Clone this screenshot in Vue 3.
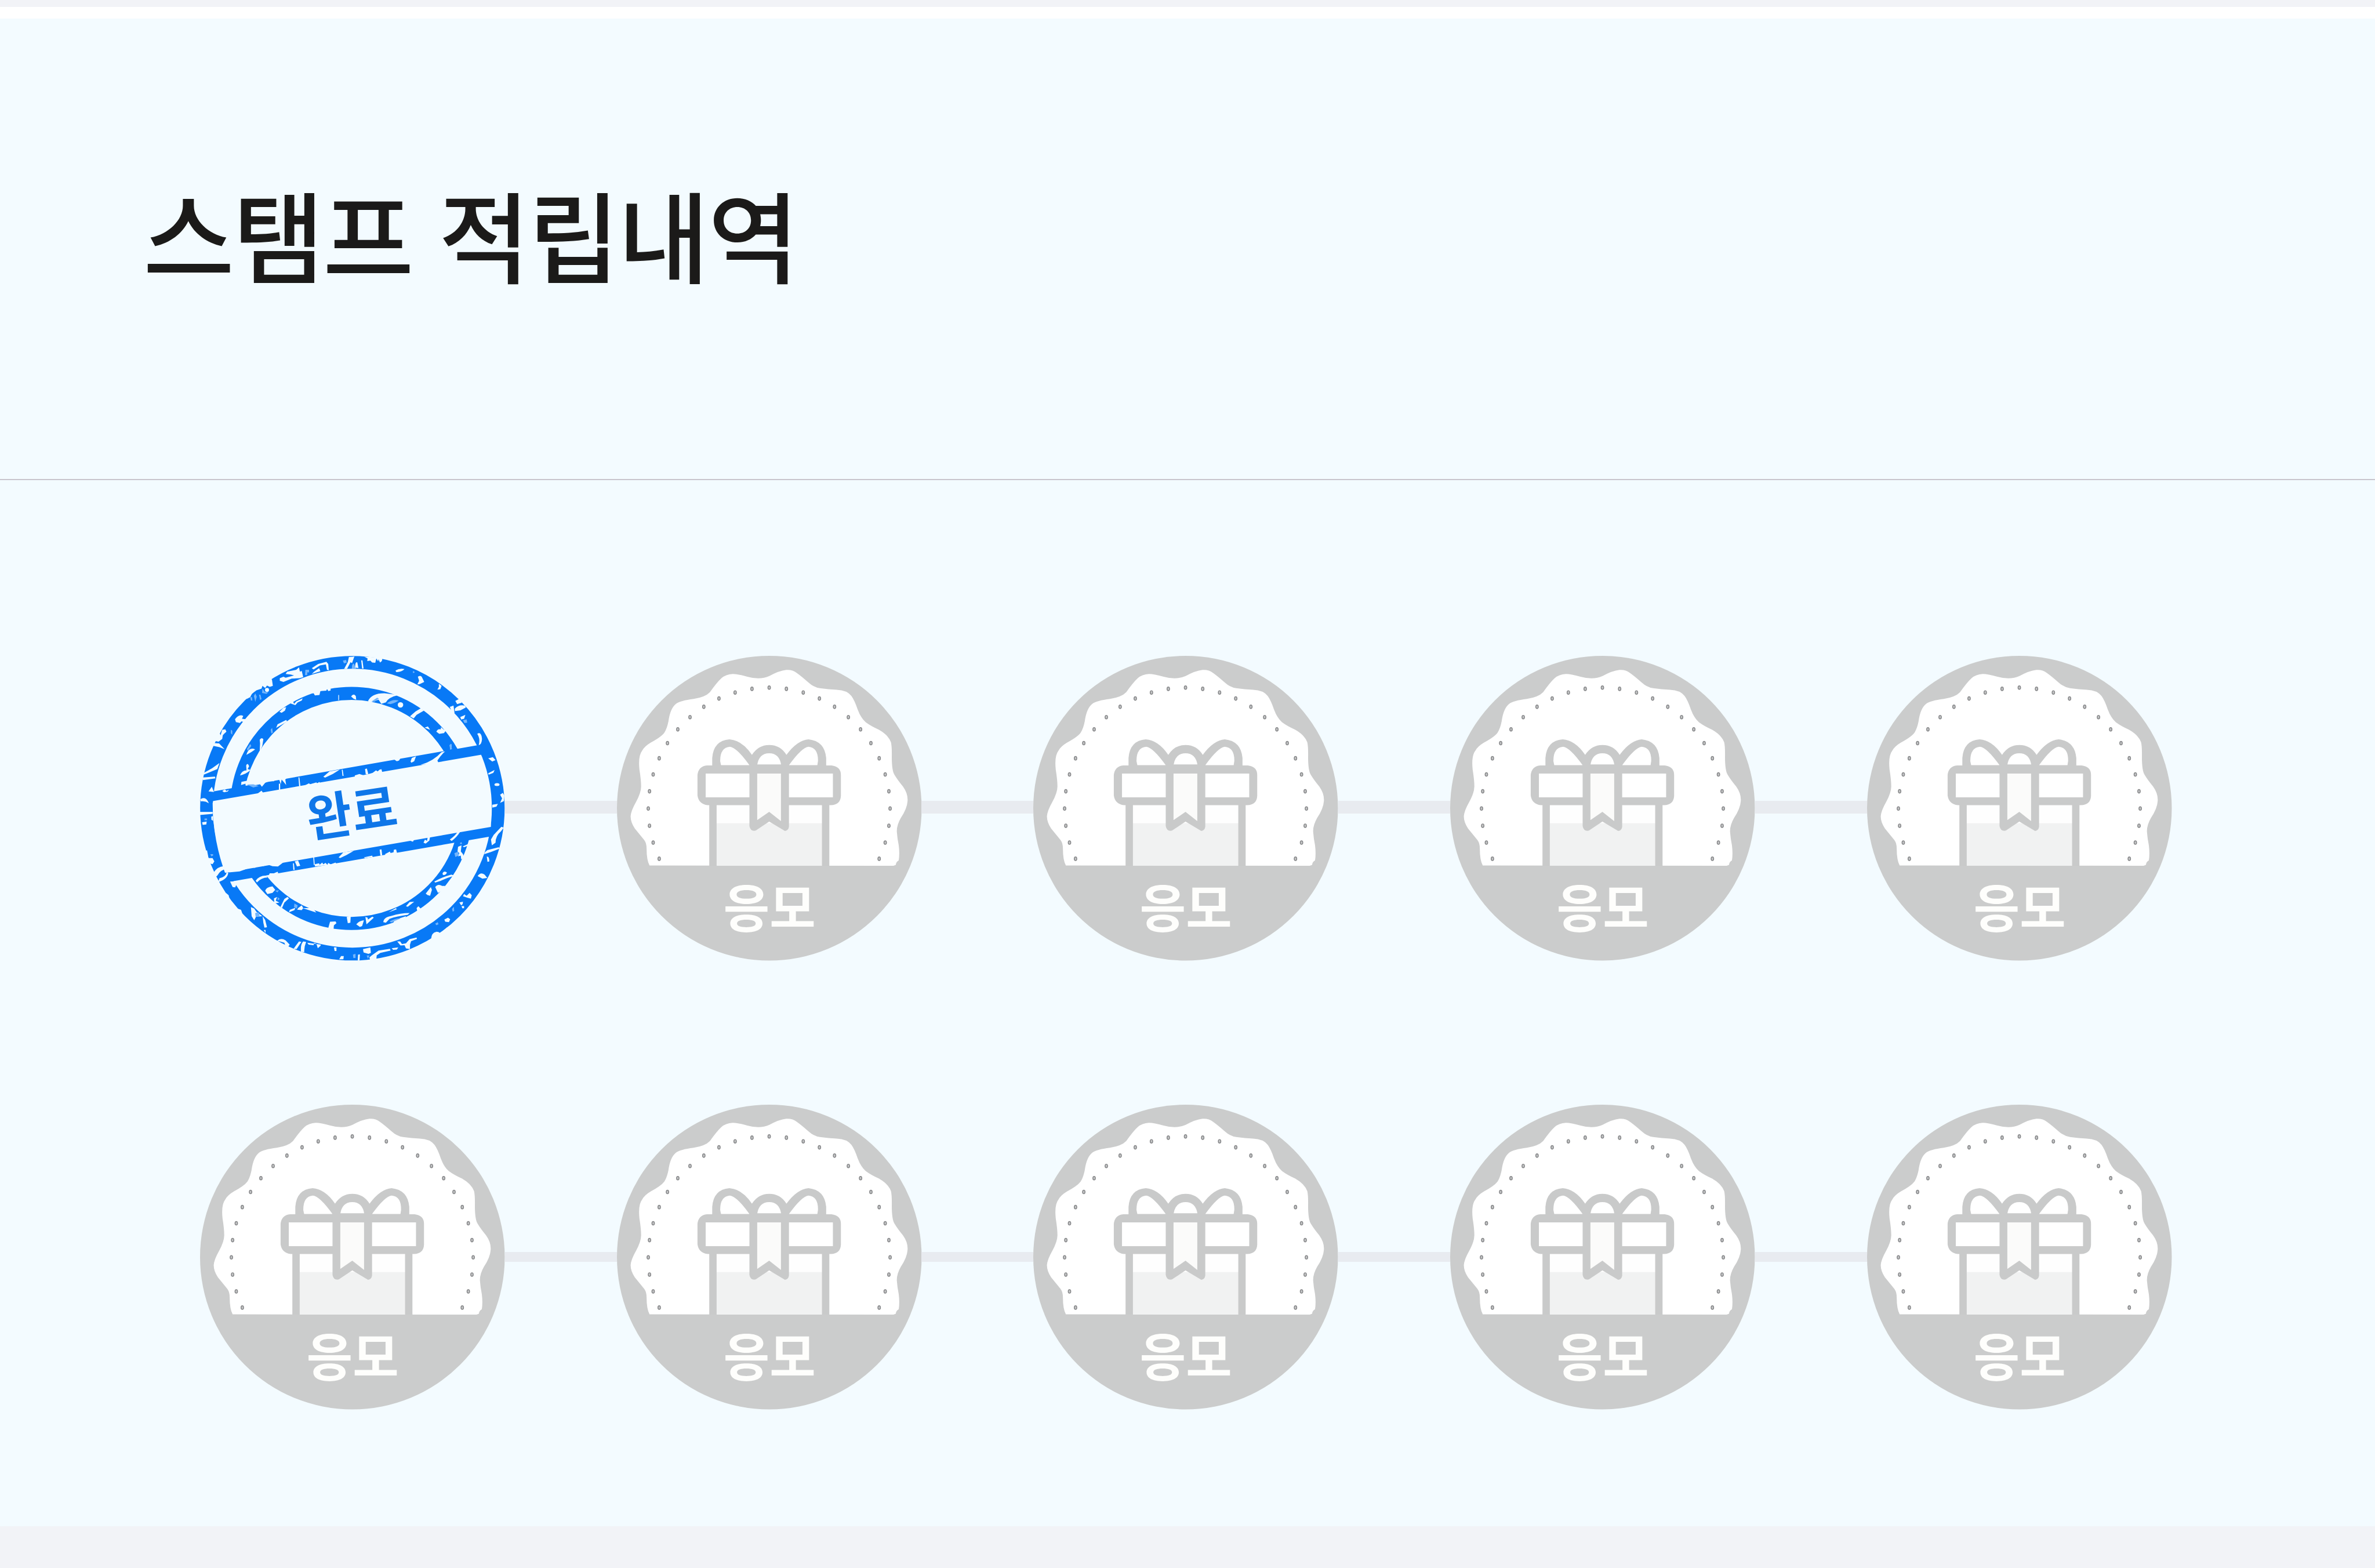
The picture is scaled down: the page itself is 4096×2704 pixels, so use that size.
<script setup>
const rows = [
  ['done', 'entry', 'entry', 'entry', 'entry'],
  ['entry', 'entry', 'entry', 'entry', 'entry'],
]

const dots = Array.from({ length: 29 }, (_, i) => {
  const angle = ((i - 14) * 2 * Math.PI) / 44
  return { x: 779 + 575 * Math.sin(angle), y: 785 - 575 * Math.cos(angle) }
})
</script>

<template>
  <main class="page">
    <section class="card">
      <header class="head">
        <h1 class="title">스탬프 적립내역</h1>
      </header>
      <div class="board">
        <div v-for="(row, r) in rows" :key="r" class="row">
          <template v-for="(kind, c) in row" :key="c">
            <span v-if="c > 0" class="link"></span>

            <svg v-if="kind === 'done'" class="badge" viewBox="64 57 1452 1452">
              <g fill="none" stroke="#0879f6">
                <circle cx="790" cy="783" r="695" stroke-width="61" />
                <circle cx="786" cy="784" r="548" stroke-width="62" />
              </g>
              <path class="paper" d="M132 725 L1395 505 Q1452 690 1450 895 L190 1110 Q125 940 124 760Z" />
              <path class="ink" d="M100 708 L1420 477 1440 522 100 753Z M170 1093 L1490 865 1480 912 180 1138Z" />

              <!-- worn edges, upper left -->
              <g class="paper" transform="translate(26 26) scale(.871)">
                <path d="M480 158 L500 150 512 155 558 143 540 138 512 135 520 122 570 112 585 98 590 122 600 118 608 152 588 158 545 160 500 178 480 172Z" />
                <path d="M655 103 L690 80 735 68 745 80 748 115 738 112 732 82 700 88 665 110Z M668 122 L695 103 702 120 655 135Z" />
                <path d="M858 42 L882 40 862 80 848 107 832 107 852 70Z" />
                <path d="M298 272 L318 262 328 242 352 224 380 215 385 200 400 212 410 198 425 205 442 200 437 165 420 155 300 230Z" />
                <circle cx="410" cy="222" r="11" />
                <path d="M235 382 Q258 352 280 365 L273 380 292 382 285 398 270 394 262 403 240 398Z" />
                <path d="M120 500 L150 456 156 470 165 440 182 438 188 450 175 462 168 470 165 490 145 505Z M112 512 L148 515 178 546 150 535 116 528Z" />
                <path d="M62 677 L110 650 150 622 138 655 98 672 65 685Z M58 701 L125 696 128 706 60 715Z M90 777 L108 752 120 780Z" />
                <path d="M45 820 Q75 800 92 842 Q70 828 48 832Z M40 890 H112 V898 H40Z" />
                <path d="M648 240 L665 240 672 252 697 250 702 228 735 226 738 215 745 228 758 225 758 205 640 215Z" />
                <path d="M478 342 L500 320 515 316 508 335 490 347Z M538 296 L552 284 558 298 570 285 605 268 600 280 578 290 565 305Z" />
                <path d="M800 250 h4 v28 h-4Z M870 258 Q885 238 896 256 L898 276 884 270Z" />
                <path d="M370 495 Q380 478 390 492 L384 530 370 558 372 515Z M297 577 Q310 532 345 547 Q330 560 297 577Z" />
                <path d="M296 635 Q304 618 312 640 L304 655 320 660 Q298 682 262 690 Q272 662 298 662Z M290 740 L318 690 350 700 330 735Z" />
                <path d="M268 742 L300 733 340 744 372 738 382 752 400 730 420 722 448 722 452 708 478 715 485 738 490 712 515 742 510 712 535 690 400 700 270 725Z" />
                <path d="M475 735 h7 v35 h-7Z M582 700 h5 l6 52 h-7Z M615 745 L640 733 645 738 680 728 685 736 695 725 702 735 702 745Z" />
                <path d="M718 697 L752 668 808 658 770 682 728 702Z M819 658 h5 l5 34 h-6Z M350 795 L380 773 388 784 350 803Z M165 775 L180 766 188 775 202 768 195 778 175 782Z" />
                <path d="M460 430 L468 410 515 386 520 395Z" />
              </g>
              <g class="haze" transform="translate(26 26) scale(.871)">
                <path d="M620 112 h20 v14 h-10 v15 h-12Z M212 440 l8 5 0 22 -8 -8Z M825 62 l18 -4 3 15 -15 4Z M338 255 l8 -14 8 18 -8 28Z M366 248 l8 0 6 25 -8 4Z M318 262 l10 0 2 18 -8 0Z" />
                <path d="M300 545 L318 518 324 528 305 556Z M430 440 l8 -10 4 25 -8 6Z M875 90 q8 -25 15 0 l8 15 -24 0Z M300 740 l35 -2 30 10 -30 8Z M385 215 l12 18 20 2 -10 8 -24 -4Z" />
              </g>

              <!-- worn edges, upper right -->
              <g class="paper" transform="translate(784 26) scale(.871)">
                <path d="M0 45 L18 38 5 75 -5 70Z M22 100 Q22 65 34 72 L40 102Z M55 60 L62 60 68 105 60 105Z" />
                <path d="M72 40 L90 50 88 64 105 62 115 72 132 74 138 50 148 66 150 54 158 72 168 64 172 45Z" />
                <path d="M243 116 Q265 102 292 108 Q275 126 246 124Z" />
                <path d="M365 150 Q378 140 386 150 L400 178 375 190 362 192 372 172Z" />
                <path d="M480 188 L495 200 488 218 472 220 480 205Z M570 282 L592 270 606 292 580 300Z M567 325 Q590 300 622 308 L628 318 598 334 568 338Z" />
                <path d="M540 315 L560 308 566 350 552 345Z M597 370 L625 358 618 380 602 384Z" />
                <path d="M690 462 Q712 448 716 490 Q715 520 698 524 Q708 490 690 462Z M750 596 L775 590 790 606 772 614Z M750 678 L785 660 778 676 752 686Z" />
                <ellipse cx="798" cy="740" rx="14" ry="8" />
                <path d="M815 795 L830 785 838 800 836 830 815 840 826 815Z M772 850 L803 845 795 860 772 866Z" />
                <path d="M92 284 Q110 240 182 240 L260 250 Q205 262 190 290 L165 298 150 275 120 286 105 290Z" />
                <circle cx="270" cy="304" r="15" />
                <path d="M322 366 L352 340 382 322 398 335 358 358 342 378Z M402 428 L420 422 432 440Z" />
                <path d="M466 450 Q475 432 490 438 L492 426 508 440 520 442 508 458 482 462Z M540 525 L548 518 550 545 542 548Z" />
                <path d="M380 632 Q450 612 494 563 L514 558 Q490 580 472 608 L478 622 440 628Z" />
                <path d="M325 614 L332 594 355 585 345 612 330 620Z M232 600 L272 592 262 608 250 612Z" />
                <path d="M76 655 L86 652 94 682 80 684Z M20 690 L45 682 70 690 118 676 136 662 145 668 156 658 166 656 170 672 165 682 20 702Z" />
              </g>
              <g class="haze" transform="translate(784 26) scale(.871)">
                <path d="M112 285 l30 -20 10 4 -25 18Z M195 296 Q225 270 260 280 Q245 292 215 300Z M338 120 q8 -2 10 6 l-10 4Z M612 388 l20 -5 3 18 -15 2Z M538 524 l8 -8 6 30 -10 2Z" />
              </g>

              <!-- worn edges, lower left -->
              <g class="paper" transform="translate(26 784) scale(.871)">
                <path d="M40 20 L112 20 V30 L42 36Z M55 76 L80 72 78 88 58 90Z M105 45 L115 42 115 68 106 62Z" />
                <path d="M68 232 L82 230 90 272 112 272 122 290 112 305 100 302 85 270Z" />
                <path d="M118 350 Q140 318 172 316 L188 332 Q155 335 138 368 L128 376Z M145 398 L150 382 Q185 375 190 348 L198 352 Q195 385 148 402Z" />
                <path d="M208 400 L250 398 236 432 222 430Z M185 462 L200 475 205 495 190 480Z M242 545 L268 555 275 575 250 560Z" />
                <path d="M322 540 L340 548 352 566 372 580 384 590 350 592 340 612 326 590Z M386 590 L400 610 410 650 396 652 390 625Z M392 665 L402 665 402 682Z" />
                <path d="M465 725 Q485 705 512 722 L534 745 526 756 510 750 505 735 480 728Z M555 768 L585 728 598 730 572 770Z M596 785 Q592 745 608 728 L624 730 Q612 760 614 786Z" />
                <path d="M630 735 L638 745 665 748 668 735 680 740 688 765 702 752 705 745Z M776 760 h14 v20 h-10Z M805 825 L815 808 830 808 828 825Z" />
                <path d="M348 395 Q370 365 408 368 L412 378 Q380 378 355 405Z" />
                <path d="M400 450 Q405 430 440 426 L455 445 440 462 412 468Z M448 492 L465 484 458 505 478 515 450 520Z M484 538 L505 495 522 484 530 492 505 515 492 545Z" />
                <path d="M535 555 L565 544 560 556 530 568Z M580 545 L600 530 608 545 600 556 575 554Z M605 545 L660 545 680 570 Z" />
                <path d="M745 655 L755 620 785 618 790 628 776 640 774 664 748 664Z M846 594 L868 592 866 625 852 628Z" />
                <path d="M200 350 L260 345 300 330 303 322 345 325 365 308 385 305 390 316 410 306 440 316 470 318 500 295 370 290 200 330Z" />
                <path d="M552 300 h5 l4 36 h-7Z M562 290 L580 285 592 314 574 318Z M663 265 h5 l3 45 h-5Z M672 305 L695 300 698 308 712 296 718 306 730 298 740 308 745 298 758 306 785 296 790 304 672 318Z" />
                <path d="M802 268 L828 240 885 232 845 255 810 272Z M440 358 L468 346 472 356 442 364Z M415 375 L425 355 460 355 460 365Z" />
              </g>
              <g class="haze" transform="translate(26 784) scale(.871)">
                <path d="M68 55 h14 v10 h-14Z M100 250 l15 0 0 8 -10 4Z M345 572 l20 -4 5 20 -22 5Z M880 800 l15 -5 -8 25Z M560 520 l18 10 -5 18 -15 -8Z M455 450 l20 -2 -8 12Z M468 485 l12 10 -12 8Z" />
              </g>

              <!-- worn edges, lower right -->
              <g class="paper" transform="translate(784 784) scale(.871)">
                <path d="M540 170 Q570 150 584 126 L596 128 Q580 155 550 178Z M396 188 L404 170 415 178 420 152 432 154 428 176 408 192Z M320 176 L345 170 338 182Z" />
                <path d="M156 226 L166 224 170 256 160 258Z M70 268 L115 258 118 266 75 272Z M185 250 L212 236 216 244 232 240 234 226 246 224 252 248 190 256Z" />
                <path d="M822 100 L835 105 820 125 Q790 150 790 188 L770 202 765 170 780 145Z M732 240 L745 228 808 212 812 220 765 238 728 250Z" />
                <path d="M742 264 Q756 260 756 290 L746 292Z M692 370 Q708 346 730 362 L745 380 718 384Z" />
                <path d="M612 480 L618 468 632 478 648 462 660 475 655 494 635 488Z M592 514 L612 510 610 524 602 530Z M604 534 h14 v12 h-10Z M510 608 L530 598 542 606 535 622 515 620Z" />
                <path d="M438 712 Q440 680 465 675 Q478 674 486 682 L500 678 525 650 540 680 460 720Z" />
                <path d="M585 210 L604 202 600 235 612 250 618 270 602 278 600 258 585 262 592 245 582 235Z M610 208 L640 195 636 205 618 212Z" />
                <path d="M500 355 Q508 338 524 350 Q520 366 502 364Z M455 400 Q500 375 548 362 L566 368 Q525 380 490 396 L460 406Z" />
                <path d="M408 466 L436 430 442 445 432 478 418 474Z M460 430 Q475 410 498 424 L514 424 500 450 475 462Z" />
                <path d="M358 545 L368 535 380 548 384 562 362 562Z M176 622 Q178 595 220 588 Q270 572 320 572 L310 582 Q250 590 210 604 L190 625Z" />
                <path d="M238 610 L300 590 296 602 245 620 230 628Z M78 594 L90 598 92 608 116 592 124 598 100 620 84 634Z M28 634 Q45 614 70 612 L60 644 48 648Z" />
                <path d="M65 770 L105 760 108 790 95 796 68 788Z M38 800 L48 798 46 832 36 832Z M112 805 L150 778 212 768 216 778 160 790 140 804 138 825 105 835 100 815Z" />
                <path d="M252 728 L268 728 278 742 300 738 320 715 358 706 360 714 328 726 322 745 322 770 300 766 292 748 270 750Z M222 765 L258 760 250 772 230 774Z" />
                <path d="M300 535 L320 512 345 510 310 538Z M205 568 L245 545 250 552Z" />
              </g>
              <g class="haze" transform="translate(784 784) scale(.871)">
                <path d="M552 550 l10 -12 2 22 -8 5Z M460 630 l14 -8 4 12 -12 5Z M210 618 q40 -20 60 -16 l-50 22Z M595 190 l8 -6 4 10 -8 2Z M10 800 l14 0 0 18 -12 0Z M565 245 l20 -8 5 20 -20 8Z M85 805 l15 0 -8 18Z" />
              </g>

              <text class="label done" transform="translate(787 807) rotate(-8.5)" x="0" y="86" textLength="432" lengthAdjust="spacingAndGlyphs">완료</text>
            </svg>

            <svg v-else class="badge" viewBox="55 59 1449 1449">
              <circle cx="779.500" cy="783.500" r="724.500" fill="#cbcccc" />
              <path
                fill="#fff"
                d="M210 1056 Q196 1030 196 975 Q196 950 185 935 L140 880 Q120 850 120 822 Q122 795 145 755 Q170 710 170 680 Q170 650 162 600 Q155 535 175 510 Q185 490 215 472 Q265 445 280 425 Q293 405 300 370 Q308 310 335 288 Q355 272 420 264 Q475 255 497 232 Q530 185 552 165 Q572 147 605 145 Q630 145 675 158 Q735 175 780 155 Q825 130 860 126 Q890 124 910 140 Q935 158 965 185 Q990 208 1020 213 Q1060 219 1100 220 Q1150 222 1170 250 Q1185 270 1200 315 Q1215 355 1238 375 Q1265 395 1300 410 Q1345 435 1358 470 Q1363 490 1362 540 Q1362 605 1375 625 Q1390 650 1415 680 Q1440 715 1437 750 Q1435 785 1405 830 Q1385 865 1386 895 Q1388 925 1395 960 Q1400 1000 1395 1032 Q1382 1040 1381 1053 L1370 1057Z"
              />
              <ellipse v-for="(d, i) in dots" :key="i" class="dot" :cx="d.x" :cy="d.y" rx="6" ry="8.500" />
              <rect x="528" y="766" width="503" height="90" fill="#fefefe" />
              <rect x="528" y="855" width="503" height="202" fill="#f1f2f2" />
              <g class="gift">
                <path d="M494 760 H529 V1058 H494Z M1030 760 H1065 V1058 H1030Z" />
                <path fill-rule="evenodd" d="M483 580 H1075 Q1120 585 1120 625 V725 Q1118 768 1072 769 H487 Q443 764 438 722 V625 Q443 584 483 580Z M477 619 V732 H1082 V619Z" />
                <path fill-rule="evenodd" d="M508 584 V545 Q514 462 590 456 Q650 460 697 530 Q727 483 779 483 Q833 483 861 530 Q912 460 966 456 Q1043 464 1050 545 V584Z M550 579 H685 Q625 495 592 491 Q545 495 546 560Z M722 579 H836 Q828 522 779 522 Q730 522 722 579Z M873 579 H1008 L1011 560 Q1013 495 966 491 Q933 495 873 579Z" />
                <path d="M685 575 H873 V872 Q870 890 854 892 L779 847 715 890 Q690 895 685 868Z" />
                <path fill="#fbfbfa" d="M722 619 H835 V845 L779 801 722 840Z" />
              </g>
              <text class="label entry" x="781" y="1349" textLength="438" lengthAdjust="spacingAndGlyphs">응모</text>
            </svg>
          </template>
        </div>
      </div>
    </section>
  </main>
</template>

<style>
body {
  margin: 0;
  background: #f2f3f7;
}
</style>

<style scoped>
.page {
  box-sizing: border-box;
  width: 4096px;
  height: 2704px;
  padding: 12px 0 72px;
  overflow: hidden;
  background: #f2f3f7;
  font-family: 'Noto Sans CJK KR', sans-serif;
}

.card {
  box-sizing: border-box;
  display: flex;
  flex-direction: column;
  height: 2620px;
  border-top: 20px solid #fff;
  background: #f3fbff;
}

.head {
  box-sizing: border-box;
  display: flex;
  align-items: center;
  height: 796px;
  padding: 0 0 57px 247px;
  border-bottom: 2px solid #c8c5cd;
}

.title {
  margin: 0;
  color: #1b1a19;
  font-size: 171px;
  font-weight: 500;
  line-height: 1;
  letter-spacing: -2.500px;
  word-spacing: 9px;
  white-space: nowrap;
}

.board {
  display: flex;
  flex-direction: column;
  gap: 248px;
  padding: 303px 350px 0 345px;
}

.row {
  display: flex;
  align-items: center;
  height: 525.500px;
}

.badge {
  flex: none;
  display: block;
  width: 525.500px;
  height: 525.500px;
  overflow: visible;
}

.link {
  flex: none;
  width: 193.200px;
  height: 22px;
  margin-bottom: 4px;
  background: #e8ebf0;
}

.row + .row .link {
  height: 17px;
  margin-bottom: 0;
}

.ink {
  fill: #0879f6;
}

.paper {
  fill: #f3fbff;
}

.haze {
  fill: #74b5fb;
}

.dot {
  fill: #c4c5c6;
  stroke: #858688;
  stroke-width: 4;
}

.gift {
  fill: #c9caca;
}

.label {
  font-family: 'Noto Sans CJK KR', sans-serif;
  font-weight: 700;
  text-anchor: middle;
}

.label.entry {
  fill: #fefefc;
  font-size: 245px;
}

.label.done {
  fill: #0f76e8;
  font-size: 240px;
}
</style>
